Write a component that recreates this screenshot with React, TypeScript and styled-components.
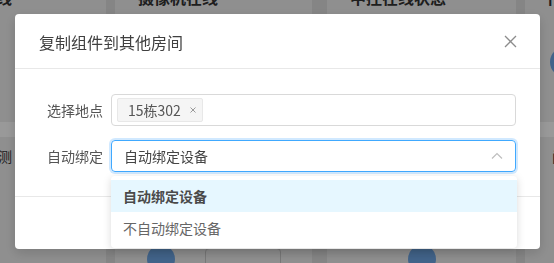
import React from 'react';
import styled, { createGlobalStyle } from 'styled-components';

const GlobalStyle = createGlobalStyle`
  html, body { margin: 0; padding: 0; }
  body {
    font-family: "Noto Sans CJK SC", "Noto Sans", sans-serif;
    background: #dedede;
    overflow: hidden;
  }
  * { box-sizing: border-box; }
`;

/* ---------- background page ---------- */
const Page = styled.div`
  width: 554px;
  height: 263px;
  overflow: hidden;
`;

const CardGrid = styled.div`
  display: grid;
  grid-template-columns: 197px 197px 195px 197px;
  column-gap: 9px;
  margin-left: -91px;
  margin-top: -14px;
`;

const Card = styled.div<{ $shift?: number }>`
  margin-left: ${(p) => p.$shift ?? 0}px;
  background: #eeeeee;
  height: 300px;
  padding: 0 23px;
  display: flex;
  flex-direction: column;
`;

const CardTitle = styled.div`
  font-size: 16px;
  line-height: 22px;
  font-weight: 700;
  color: #333;
  white-space: nowrap;
`;

const Avatar = styled.div<{ $size: number }>`
  width: ${(p) => p.$size}px;
  height: ${(p) => p.$size}px;
  border-radius: 50%;
  background: #6ea6e6;
  flex: none;
`;

const TopAvatarRow = styled.div`
  margin-top: 39px;
  display: flex;
  margin-left: 2px;
`;

const Band = styled.div`
  margin: 45px -23px 0;
  height: 15px;
  background: #ffffff;
`;

const CardLine = styled.div<{ $indent?: number }>`
  margin-top: 9px;
  margin-left: ${(p) => p.$indent ?? 0}px;
  font-size: 14px;
  line-height: 20px;
  color: #333;
  white-space: nowrap;
`;

const BottomRow = styled.div`
  margin-top: 79px;
  height: 32px;
  display: flex;
  justify-content: center;
  align-items: flex-start;
  gap: 30px;
`;

const OutlineBox = styled.div`
  width: 76px;
  height: 30px;
  margin-top: 3px;
  border: 1px solid #c8c8c8;
  border-radius: 4px;
`;

/* ---------- modal ---------- */
const Mask = styled.div`
  position: fixed;
  inset: 0;
  background: rgba(0, 0, 0, 0.4);
`;

const ModalWrap = styled.div`
  position: fixed;
  inset: 0;
  display: flex;
  align-items: flex-start;
  padding: 14px 0 0 15px;
`;

const Modal = styled.div`
  width: 525px;
  background: #fff;
  border-radius: 4px;
  box-shadow: 0 4px 12px rgba(0, 0, 0, 0.15);
`;

const Header = styled.div`
  height: 55px;
  padding: 0 24px;
  border-bottom: 1px solid #e8e8e8;
  display: flex;
  align-items: center;
  justify-content: space-between;
`;

const Title = styled.div`
  font-size: 16px;
  line-height: 22px;
  color: #404040;
  padding-top: 1px;
`;

const CloseIcon = styled.svg`
  width: 13px;
  height: 13px;
  margin-right: -1px;
  margin-top: 1px;
`;

const Body = styled.div`
  padding: 25px 24px 24px;
  display: flex;
  flex-direction: column;
  gap: 14px;
`;

const FormRow = styled.div`
  display: flex;
  align-items: center;
`;

const Label = styled.div`
  width: 72px;
  padding-right: 8px;
  text-align: right;
  font-size: 14px;
  line-height: 32px;
  color: #555;
  white-space: nowrap;
`;

const Control = styled.div`
  flex: 1;
  position: relative;
`;

const TagBox = styled.div`
  height: 32px;
  border: 1px solid #d9d9d9;
  border-radius: 4px;
  padding: 3px 5px;
  display: flex;
  align-items: flex-start;
`;

const Tag = styled.div`
  height: 24px;
  background: #f5f5f5;
  border: 1px solid #e8e8e8;
  border-radius: 2px;
  padding: 0 6px 0 10px;
  display: inline-flex;
  align-items: center;
  gap: 9px;
  font-size: 14px;
  line-height: 22px;
  color: #555;
`;

const TagClose = styled.svg`
  width: 6px;
  height: 6px;
`;

const SelectBox = styled.div`
  height: 32px;
  border: 1px solid #40a9ff;
  border-radius: 4px;
  box-shadow: 0 0 0 2px rgba(24, 144, 255, 0.2);
  padding: 0 12px 0 12px;
  display: flex;
  align-items: center;
  justify-content: space-between;
  font-size: 14px;
  color: #444;
`;

const Arrow = styled.svg`
  width: 12px;
  height: 12px;
`;

const Dropdown = styled.div`
  position: absolute;
  top: calc(100% + 4px);
  left: 0;
  width: calc(100% + 1px);
  background: #fff;
  border-radius: 4px;
  box-shadow: 0 2px 8px rgba(0, 0, 0, 0.15);
  padding: 4px 0;
  z-index: 10;
`;

const Option = styled.div<{ $active?: boolean }>`
  padding: 5px 12px;
  font-size: 14px;
  line-height: 22px;
  color: ${(p) => (p.$active ? '#4a4a4a' : '#666')};
  font-weight: ${(p) => (p.$active ? 600 : 400)};
  background: ${(p) => (p.$active ? '#e6f7ff' : '#fff')};
`;

const Footer = styled.div`
  height: 53px;
  border-top: 1px solid #e8e8e8;
`;

const cards = [
  { title: '温控器在线', line: '温度湿度检测', indent: -4, avatar: false, box: false, shift: 0 },
  { title: '摄像机在线', line: '摄像机状态', indent: 0, avatar: true, box: true, shift: 0 },
  { title: '中控在线状态', line: '中控状态', indent: 0, avatar: true, box: false, shift: 6 },
  { title: '门锁在线', line: '门锁状态', indent: 4, avatar: false, box: false, shift: 0 },
];

export default function App() {
  return (
    <>
      <GlobalStyle />
      <Page>
        <CardGrid>
          {cards.map((c) => (
            <Card key={c.title} $shift={c.shift}>
              <CardTitle>{c.title}</CardTitle>
              <TopAvatarRow>
                <Avatar $size={30} />
              </TopAvatarRow>
              <Band />
              <CardLine $indent={c.indent}>{c.line}</CardLine>
              <BottomRow>
                {c.avatar && <Avatar $size={28} />}
                {c.box && <OutlineBox />}
              </BottomRow>
            </Card>
          ))}
        </CardGrid>
      </Page>
      <Mask />
      <ModalWrap>
        <Modal>
          <Header>
            <Title>复制组件到其他房间</Title>
            <CloseIcon viewBox="0 0 13 13">
              <path d="M1 1 L12 12 M12 1 L1 12" stroke="#8c8c8c" strokeWidth="1.3" fill="none" />
            </CloseIcon>
          </Header>
          <Body>
            <FormRow>
              <Label>选择地点</Label>
              <Control>
                <TagBox>
                  <Tag>
                    <span>15栋302</span>
                    <TagClose viewBox="0 0 6 6">
                      <path d="M0.5 0.5 L5.5 5.5 M5.5 0.5 L0.5 5.5" stroke="#999" strokeWidth="1" fill="none" />
                    </TagClose>
                  </Tag>
                </TagBox>
              </Control>
            </FormRow>
            <FormRow>
              <Label>自动绑定</Label>
              <Control>
                <SelectBox>
                  <span>自动绑定设备</span>
                  <Arrow viewBox="0 0 12 12">
                    <polyline points="1,8.5 6,3.5 11,8.5" stroke="#bfbfbf" strokeWidth="1.2" fill="none" />
                  </Arrow>
                </SelectBox>
                <Dropdown>
                  <Option $active>自动绑定设备</Option>
                  <Option>不自动绑定设备</Option>
                </Dropdown>
              </Control>
            </FormRow>
          </Body>
          <Footer />
        </Modal>
      </ModalWrap>
    </>
  );
}
